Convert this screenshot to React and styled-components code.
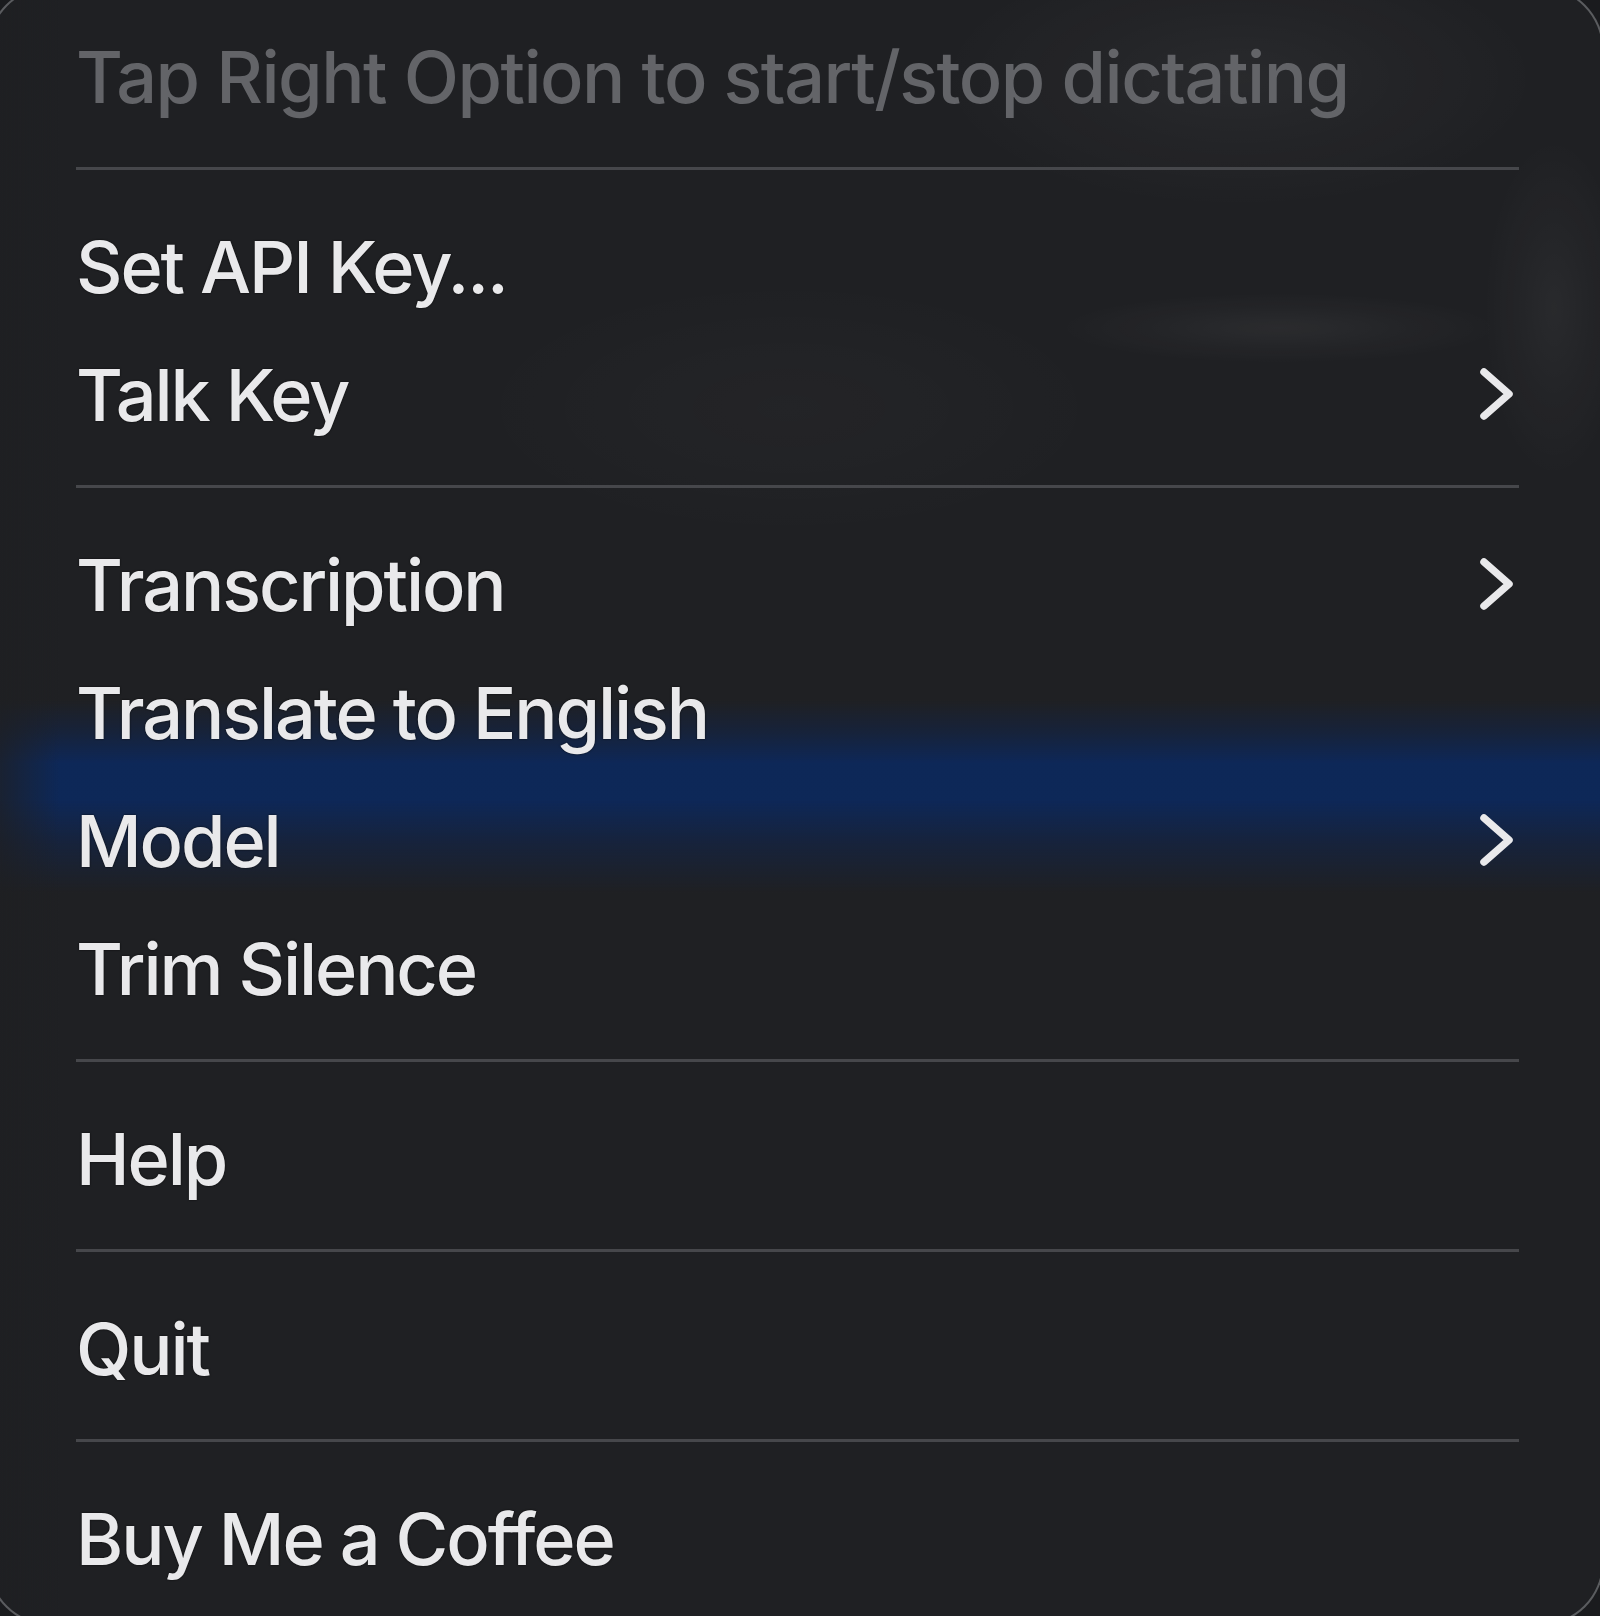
import React from "react";
import styled, { createGlobalStyle } from "styled-components";

const GlobalStyle = createGlobalStyle`
  html, body {
    margin: 0;
    padding: 0;
    background: #1a1b1e;
    overflow: hidden;
  }
  body {
    font-family: Inter, "Noto Sans", "Liberation Sans", sans-serif;
    -webkit-font-smoothing: antialiased;
  }
`;

const Panel = styled.div`
  box-sizing: border-box;
  margin: -14px -4px 0 -13px;
  height: 1640px;
  border: 2px solid rgba(150, 151, 156, 0.5);
  border-radius: 64px;
  padding: 24px 83px 0 87px;
  display: flex;
  flex-direction: column;
  background:
    linear-gradient(90deg, rgba(30, 31, 34, 0.85) 0px, rgba(30, 31, 34, 0) 70px),
    linear-gradient(
      180deg,
      rgba(12, 38, 88, 0) 712px,
      rgba(12, 38, 88, 0.45) 745px,
      rgba(12, 40, 92, 0.92) 775px,
      rgba(12, 40, 92, 0.92) 812px,
      rgba(12, 38, 88, 0.45) 856px,
      rgba(12, 38, 88, 0) 905px
    ),
    radial-gradient(ellipse 300px 130px at 1250px 90px, rgba(255, 255, 255, 0.045), transparent),
    radial-gradient(ellipse 220px 35px at 1290px 340px, rgba(255, 255, 255, 0.05), transparent),
    radial-gradient(ellipse 70px 170px at 1565px 320px, rgba(255, 255, 255, 0.045), transparent),
    radial-gradient(ellipse 320px 130px at 800px 420px, rgba(255, 255, 255, 0.02), transparent),
    #1f2023;
`;

const Row = styled.div`
  display: flex;
  align-items: center;
  justify-content: space-between;
  height: 128px;
  flex: none;
  font-size: 72px;
  font-weight: 500;
  letter-spacing: ${(p) => (p.$muted ? "-1.5px" : "-2.1px")};
  color: ${(p) => (p.$muted ? "#636468" : "#e9e9eb")};
  text-shadow: ${(p) => (p.$muted ? "none" : "0 0 2px rgba(0,0,0,0.85)")};
  white-space: nowrap;
`;

const Label = styled.span`
  display: block;
`;

const Divider = styled.div`
  flex: none;
  height: 3px;
  margin: 27px 0 32px;
  background: #46474b;
`;

const Chevron = styled.svg`
  width: 40px;
  height: 58px;
  margin-right: 4px;
  flex: none;
`;

function Arrow() {
  return (
    <Chevron viewBox="0 0 40 58">
      <polyline
        points="9,7 34,29 9,51"
        fill="none"
        stroke="#e9e9eb"
        strokeWidth="7.5"
        strokeLinecap="round"
        strokeLinejoin="round"
      />
    </Chevron>
  );
}

const sections = [
  [{ label: "Set API Key..." }, { label: "Talk Key", sub: true }],
  [
    { label: "Transcription", sub: true },
    { label: "Translate to English" },
    { label: "Model", sub: true },
    { label: "Trim Silence" },
  ],
  [{ label: "Help" }],
  [{ label: "Quit" }],
  [{ label: "Buy Me a Coffee" }],
];

export default function App() {
  return (
    <>
      <GlobalStyle />
      <Panel>
        <Row $muted>
          <Label>Tap Right Option to start/stop dictating</Label>
        </Row>
        {sections.map((items, i) => (
          <React.Fragment key={i}>
            <Divider />
            {items.map((it) => (
              <Row key={it.label}>
                <Label>{it.label}</Label>
                {it.sub && <Arrow />}
              </Row>
            ))}
          </React.Fragment>
        ))}
      </Panel>
    </>
  );
}
